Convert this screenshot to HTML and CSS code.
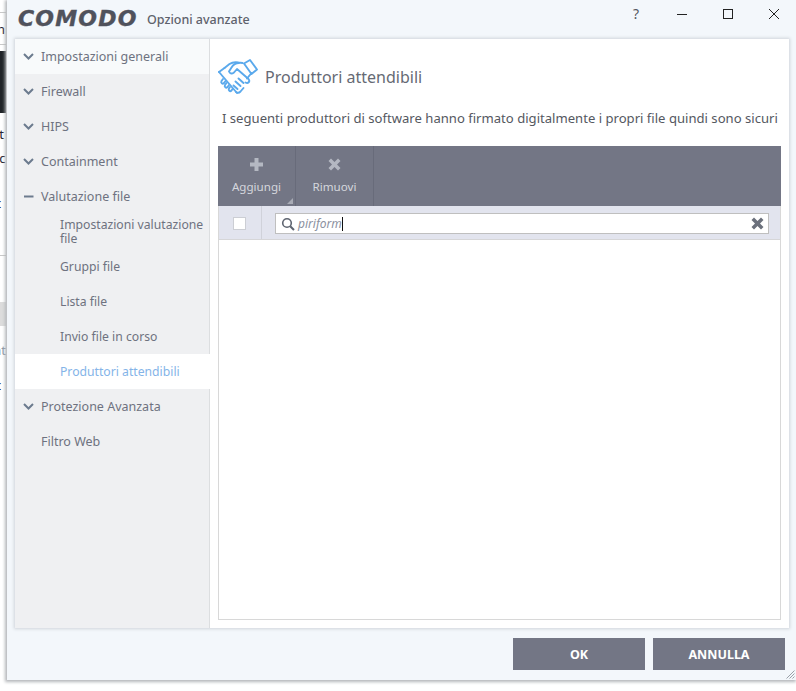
FILE: index.html
```html
<!DOCTYPE html>
<html lang="it">
<head>
<meta charset="utf-8">
<title>Opzioni avanzate</title>
<link rel="stylesheet" href="styles.css">
</head>
<body>
<div class="backdrop" aria-hidden="true">
  <div class="bd-line bd-l1"></div>
  <div class="bd-text bd-t0">n</div>
  <div class="bd-line bd-l2"></div>
  <div class="bd-dark"></div>
  <div class="bd-text bd-t1">st</div>
  <div class="bd-text bd-t2">ec</div>
  <div class="bd-text bd-t3">c</div>
  <div class="bd-line bd-l3"></div>
  <div class="bd-grey"></div>
  <div class="bd-text bd-t4">at</div>
  <div class="bd-text bd-t5">c</div>
</div>
<div class="window">
  <header class="titlebar">
    <span class="logo">COMODO</span>
    <span class="title">Opzioni avanzate</span>
    <div class="controls">
      <span class="ctl ctl-help">?</span>
      <svg class="ctl" width="12" height="12" viewBox="0 0 12 12"><path d="M1 6.500h10" stroke="#222" fill="none"/></svg>
      <svg class="ctl" width="12" height="12" viewBox="0 0 12 12"><rect x="1.500" y="1.500" width="9" height="9" stroke="#222" fill="none"/></svg>
      <svg class="ctl" width="12" height="12" viewBox="0 0 12 12"><path d="M1 1l10 10M11 1L1 11" stroke="#222" fill="none"/></svg>
    </div>
  </header>
  <main class="panel">
    <nav class="sidebar">
      <div class="nav-item nav-first"><svg class="chev" width="11" height="7" viewBox="0 0 11 7"><path d="M1 1l4.500 4.500L10 1" /></svg>Impostazioni generali</div>
      <div class="nav-item"><svg class="chev" width="11" height="7" viewBox="0 0 11 7"><path d="M1 1l4.500 4.500L10 1" /></svg>Firewall</div>
      <div class="nav-item"><svg class="chev" width="11" height="7" viewBox="0 0 11 7"><path d="M1 1l4.500 4.500L10 1" /></svg>HIPS</div>
      <div class="nav-item"><svg class="chev" width="11" height="7" viewBox="0 0 11 7"><path d="M1 1l4.500 4.500L10 1" /></svg>Containment</div>
      <div class="nav-item"><svg class="chev" width="11" height="7" viewBox="0 0 11 7"><path d="M1 3.500h9.500" /></svg>Valutazione file</div>
      <div class="sub-item">Impostazioni valutazione file</div>
      <div class="sub-item">Gruppi file</div>
      <div class="sub-item">Lista file</div>
      <div class="sub-item">Invio file in corso</div>
      <div class="sub-item sub-active">Produttori attendibili</div>
      <div class="nav-item"><svg class="chev" width="11" height="7" viewBox="0 0 11 7"><path d="M1 1l4.500 4.500L10 1" /></svg>Protezione Avanzata</div>
      <div class="nav-item nav-plain">Filtro Web</div>
    </nav>
    <section class="content">
      <div class="heading">
        <svg class="hand" width="40" height="36" viewBox="0 0 40 36" fill="none" stroke="#5aa9ec" stroke-width="1.900" stroke-linejoin="round" stroke-linecap="round">
          <path d="M1 13l18 21"/>
          <path d="M1 13l5.500-4"/>
          <path d="M6.500 9l5-4c3-2 6-2 9-1.500l4 .5"/>
          <path d="M26 4.500l6-3.500 7 9.500-5.500 4.500z"/>
          <path d="M21 4c-4 0-6 2-7.500 4.500l-2.500 4c1 2.500 3 2.500 5 1l3-3.500 11.500 10c2 2.500-.5 5-3 3.500"/>
          <path d="M33.500 14l-4.500 5.500"/>
          <path d="M5 20l-1.500 2c-1 2 1 3.500 2.500 2l1.500-2M8.500 24l-1.500 2c-1 2 1 3.500 2.500 2l1.500-2M12 28l-1 1.500c-1 2 1 3.500 2.500 2l1-1.500"/>
          <path d="M25.500 24l-5-4.500M22.500 27l-5-4.500M19.500 30l-4-3.500M18 33c1.500 1 3 1 4.500-.5l3-3.500"/>
        </svg>
        <h1 class="heading-text">Produttori attendibili</h1>
      </div>
      <p class="desc">I seguenti produttori di software hanno firmato digitalmente i propri file quindi sono sicuri</p>
      <div class="table">
        <div class="toolbar">
          <div class="tool tool-add">
            <svg width="13" height="13" viewBox="0 0 13 13"><path d="M4.500 0h4v4.500H13v4H8.500V13h-4V8.500H0v-4h4.500z" fill="#b4b8c2"/></svg>
            <span>Aggiungi</span>
            <i class="tool-corner"></i>
          </div>
          <div class="tool tool-del">
            <svg width="13" height="13" viewBox="0 0 13 13"><path d="M3 0.500l3.500 3.500L10 0.500 12.500 3 9 6.500l3.500 3.500-2.500 2.500L6.500 9 3 12.500 0.500 10 4 6.500 0.500 3z" fill="#b4b8c2"/></svg>
            <span>Rimuovi</span>
          </div>
        </div>
        <div class="filter">
          <div class="check-cell"><span class="check"></span></div>
          <div class="search">
            <svg width="14" height="14" viewBox="0 0 14 14" fill="none" stroke="#5e6470" stroke-width="1.600"><circle cx="6" cy="6" r="4.300"/><path d="M9.200 9.200l3.800 3.800" stroke-width="2"/></svg>
            <span class="search-text">piriform</span><span class="caret"></span>
            <svg class="clear" width="13" height="13" viewBox="0 0 13 13"><path d="M3 0.500l3.500 3.500L10 0.500 12.500 3 9 6.500l3.500 3.500-2.500 2.500L6.500 9 3 12.500 0.500 10 4 6.500 0.500 3z" fill="#6b707c"/></svg>
          </div>
        </div>
        <div class="rows"></div>
      </div>
    </section>
  </main>
  <footer class="footer">
    <button class="btn" type="button">OK</button>
    <button class="btn" type="button">ANNULLA</button>
    <svg class="grip" width="9" height="9" viewBox="0 0 9 9" stroke="#9aa0a8" fill="none"><path d="M8.500 0.500l-8 8M8.500 3.500l-5 5M8.500 6.500l-2 2"/></svg>
  </footer>
</div>
</body>
</html>
```
FILE: styles.css
```css
* { box-sizing: border-box; }
html, body { margin: 0; padding: 0; }
body {
  width: 796px;
  height: 691px;
  overflow: hidden;
  background: #fff;
  font-family: "Noto Sans", "Open Sans", sans-serif;
  position: relative;
}
.backdrop {
  position: absolute;
  left: 0;
  top: 0;
  width: 6px;
  height: 680px;
  overflow: hidden;
  background: #fff;
}
.bd-line, .bd-dark, .bd-grey, .bd-text { position: absolute; left: 0; }
.bd-line { width: 6px; height: 1px; background: #c8c8c8; }
.bd-l1 { top: 12px; }
.bd-l2 { top: 44px; }
.bd-l3 { top: 255px; }
.bd-dark { top: 51px; width: 6px; height: 62px; background: #1f2328; }
.bd-grey { top: 302px; width: 6px; height: 24px; background: #dcdcdc; }
.bd-text { font: 13px/16px "Noto Sans", sans-serif; color: #223; left: -1px; white-space: nowrap; }
.bd-t0 { top: 21px; left: -3px; }
.bd-t1 { top: 126px; left: -7px; }
.bd-t2 { top: 150px; left: -8px; }
.bd-t3 { top: 195px; left: -5px; }
.bd-t4 { top: 342px; left: -6px; color: #8a97a8; }
.bd-t5 { top: 377px; left: -5px; }

.window {
  position: absolute;
  left: 7px;
  top: 0;
  width: 789px;
  height: 680px;
  display: flex;
  flex-direction: column;
  background: #f3f7fb;
  box-shadow: -1px 1px 3px 1px #b4b7ba;
}
.titlebar {
  height: 39px;
  flex: none;
  display: flex;
  align-items: center;
  padding-left: 11px;
}
.logo {
  font: italic bold 22px/26px "DejaVu Sans", sans-serif;
  color: #50525c;
  letter-spacing: 1.200px;
  -webkit-text-stroke: 0.4px #50525c;
  width: 129px;
  white-space: nowrap;
  position: relative;
  top: -1px;
}
.title {
  font-size: 12.500px;
  font-weight: 500;
  color: #5e626c;
}
.controls {
  margin-left: auto;
  display: flex;
  align-items: center;
  gap: 34px;
  padding-right: 16px;
  position: relative;
  top: -6px;
}
.ctl-help { font-size: 14px; line-height: 14px; color: #55585f; width: 12px; text-align: center; }
.panel {
  margin: 0 7px 0 8px;
  height: 589px;
  flex: none;
  display: flex;
  background: #fff;
  box-shadow: 0 0 3px 1px #cfd4da;
}
.sidebar {
  width: 195px;
  flex: none;
  background: #eff0f2;
  border-right: 1px solid #dcdee0;
  color: #6e7280;
  font-size: 12.500px;
}
.nav-item {
  height: 35px;
  display: flex;
  align-items: center;
  padding-left: 8px;
  white-space: nowrap;
}
.nav-first { background: #f8fafb; }
.nav-plain { padding-left: 26px; }
.chev {
  flex: none;
  margin-right: 7px;
  fill: none;
  stroke: #6c7b8e;
  stroke-width: 2;
}
.sub-item {
  height: 35px;
  display: flex;
  align-items: center;
  padding-left: 45px;
  font-size: 12.200px;
  line-height: 14px;
}
.sub-active { background: #fff; color: #84b4e8; margin-right: -1px; }
.content {
  flex: 1;
  min-width: 0;
  padding: 18px 8px 8px 8px;
  display: flex;
  flex-direction: column;
}
.heading {
  display: flex;
  align-items: center;
  height: 40px;
  flex: none;
}
.hand { flex: none; margin-right: 7px; }
.heading-text {
  margin: 0;
  font-size: 16px;
  font-weight: 400;
  color: #666a74;
}
.desc {
  margin: 11px 0 0;
  padding-left: 4px;
  font-size: 13.100px;
  line-height: 20px;
  height: 38px;
  flex: none;
  color: #55585f;
  white-space: nowrap;
}
.table {
  flex: 1;
  display: flex;
  flex-direction: column;
  border: 1px solid #d8d8d8;
  border-top: 0;
}
.toolbar {
  height: 60px;
  flex: none;
  margin: 0 -1px;
  background: #737685;
  display: flex;
}
.tool {
  position: relative;
  height: 60px;
  border-right: 1px solid #686b7a;
  display: flex;
  flex-direction: column;
  align-items: center;
  padding-top: 12px;
  color: #d5d7dd;
  font-size: 11.600px;
  line-height: 16px;
}
.tool span { margin-top: 8px; }
.tool-add { width: 78px; }
.tool-del { width: 78px; }
.tool-corner {
  position: absolute;
  right: 2px;
  bottom: 2px;
  width: 0;
  height: 0;
  border-left: 6px solid transparent;
  border-bottom: 6px solid #a8abb5;
}
.filter {
  height: 34px;
  flex: none;
  display: flex;
  align-items: stretch;
  background: #e2e4ee;
  border-bottom: 1px solid #d6d6d8;
}
.check-cell {
  width: 43px;
  flex: none;
  display: flex;
  align-items: center;
  justify-content: center;
  border-right: 1px solid #d0d2da;
}
.check {
  width: 13px;
  height: 13px;
  margin: 2px 2px 0 0;
  background: #fff;
  border: 1px solid #ccced4;
  display: block;
}
.search {
  flex: none;
  width: 494px;
  height: 21px;
  margin: 7px 0 0 13px;
  background: #fff;
  border: 1px solid #bfbfbf;
  display: flex;
  align-items: center;
  padding-left: 5px;
}
.search-text {
  margin-left: 3px;
  font-size: 12px;
  font-style: italic;
  color: #8b919f;
}
.caret { width: 1px; height: 14px; background: #111; }
.clear { margin-left: auto; margin-right: 4px; }
.rows { flex: 1; background: #fff; }
.footer {
  flex: 1;
  position: relative;
  display: flex;
  justify-content: flex-end;
  gap: 8px;
  padding: 10px 11px 0 0;
}
.btn {
  width: 132px;
  height: 32px;
  border: 0;
  padding: 0;
  background: #737685;
  color: #fff;
  font-family: inherit;
  font-size: 12.500px;
  font-weight: 700;
}
.grip { position: absolute; right: 1px; bottom: 1px; }
```
